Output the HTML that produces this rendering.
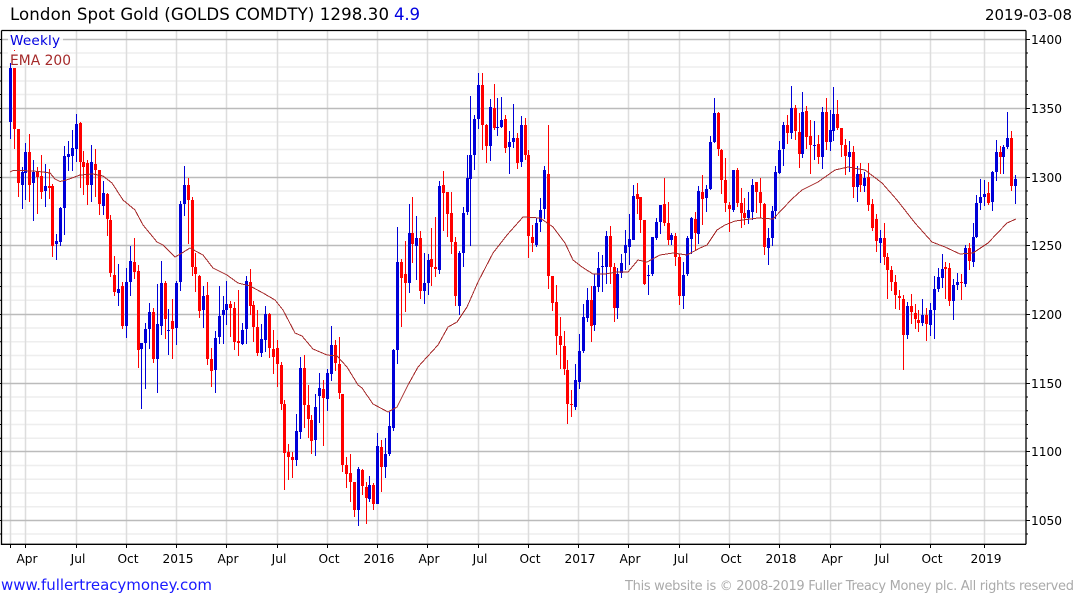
<!DOCTYPE html>
<html><head><meta charset="utf-8"><title>London Spot Gold</title>
<style>
html,body{margin:0;padding:0;background:#fff;width:1075px;height:600px;overflow:hidden}
svg{display:block}
text{font-family:"DejaVu Sans","Liberation Sans",sans-serif}
</style></head><body>
<svg width="1075" height="600" viewBox="0 0 1075 600" xmlns="http://www.w3.org/2000/svg">
<rect width="1075" height="600" fill="#fff"/>
<path fill="none" stroke="#eee" stroke-width="1.5" d="M2 53H1026M2 67H1026M2 81H1026M2 94.5H1026M2 122H1026M2 135.8H1026M2 149.5H1026M2 163.3H1026M2 191H1026M2 204.8H1026M2 218.5H1026M2 232.3H1026M2 259H1026M2 272.8H1026M2 286.5H1026M2 300.3H1026M2 328H1026M2 341.8H1026M2 355.5H1026M2 369.3H1026M2 397H1026M2 410.8H1026M2 424.5H1026M2 438.3H1026M2 465.5H1026M2 479.3H1026M2 493H1026M2 506.8H1026M2 534H1026"/>
<path fill="none" stroke="#ddd" stroke-width="1.5" d="M10.5 31V544M25.5 31V544M76.5 31V544M126.5 31V544M176.5 31V544M226.5 31V544M277.5 31V544M327.5 31V544M377.5 31V544M427.5 31V544M478.5 31V544M528.5 31V544M578.5 31V544M628.5 31V544M679.5 31V544M729.5 31V544M779.5 31V544M830.5 31V544M880.5 31V544M930.5 31V544M984.5 31V544"/>
<path fill="none" stroke="#bbb" stroke-width="1.4" d="M2 39.5H1026M2 108.5H1026M2 177.5H1026M2 245.5H1026M2 314.5H1026M2 383.5H1026M2 451.5H1026M2 520.5H1026"/>
<g fill="none" shape-rendering="crispEdges">
<path stroke="#0000d8" stroke-width="1" d="M10.5 63V139M22.5 167V209M25.5 143V200M33.5 160V221M45.5 164V207M56.5 234V260M60.5 207V246M64.5 146V235M68.5 141V171M72.5 130V171M76.5 114V162M91.5 145V202M103.5 181V215M118.5 264V306M126.5 268V338M130.5 246V296M141.5 343V409M145.5 323V389M149.5 303V349M157.5 284V393M161.5 261V335M168.5 309V355M176.5 281V345M180.5 201V291M184.5 166V216M203.5 286V328M215.5 331V393M219.5 286V344M223.5 296V344M226.5 281V325M242.5 323V345M246.5 276V344M261.5 324V357M265.5 306V352M296.5 414V466M300.5 357V439M315.5 394V456M319.5 373V423M327.5 369V411M331.5 326V381M358.5 467V526M369.5 476V502M377.5 433V504M385.5 438V478M389.5 412V456M393.5 349V431M397.5 227V364M409.5 204V293M416.5 216V280M424.5 253V304M428.5 254V295M439.5 181V274M459.5 251V315M463.5 207V267M467.5 155V215M470.5 96V246M474.5 115V170M478.5 73V129M490.5 99V161M497.5 98V136M501.5 97V128M509.5 131V174M513.5 104V148M521.5 116V167M536.5 218V247M540.5 198V232M544.5 166V219M575.5 364V410M579.5 334V389M583.5 304V353M587.5 288V322M594.5 274V331M598.5 252V292M602.5 255V292M606.5 231V284M617.5 268V319M621.5 254V278M625.5 230V270M629.5 214V265M633.5 185V240M648.5 265V295M652.5 237V276M656.5 218V240M660.5 205V234M671.5 233V245M683.5 262V309M687.5 236V276M691.5 217V254M698.5 186V244M706.5 185V212M710.5 136V190M714.5 98V143M733.5 170V212M748.5 192V224M752.5 179V220M768.5 228V265M772.5 206V246M775.5 166V219M779.5 141V174M783.5 122V166M791.5 86V139M802.5 92V158M814.5 121V160M822.5 107V169M830.5 110V151M833.5 87V141M849.5 141V172M857.5 166V202M864.5 172V192M880.5 230V263M907.5 302V339M922.5 299V326M930.5 303V336M934.5 276V339M938.5 268V292M942.5 254V288M953.5 279V320M957.5 273V290M965.5 245V287M973.5 223V267M976.5 195V238M980.5 179V210M984.5 180V206M992.5 171V211M996.5 140V181M1003.5 145V174M1007.5 112V149M1015.5 175V204"/>
<path stroke="#0000d8" stroke-width="3" d="M10.5 68V122M22.5 172V185M25.5 152V173M33.5 172V183M45.5 186V191M56.5 241V244M60.5 208V242M64.5 156V208M68.5 154V157M72.5 148V156M76.5 124V149M91.5 162V185M103.5 193V206M118.5 289V293M126.5 282V326M130.5 261V282M141.5 343V349M145.5 329V343M149.5 312V329M157.5 324V359M161.5 283V326M168.5 330V331M176.5 283V328M180.5 204V282M184.5 185V204M203.5 296V310M215.5 338V370M219.5 316V337M223.5 310V315M226.5 304V310M242.5 330V344M246.5 281V329M261.5 339V353M265.5 314V340M296.5 431V460M300.5 368V432M315.5 407V440M319.5 388V396M327.5 373V399M331.5 345V374M358.5 469V510M369.5 485V499M377.5 446V504M385.5 454V467M389.5 426V454M393.5 350V428M397.5 262V350M409.5 233V283M416.5 238V246M424.5 283V291M428.5 260V283M439.5 186V270M459.5 253V306M463.5 213V253M467.5 178V212M470.5 155V179M474.5 119V155M478.5 85V119M490.5 107V146M497.5 127V128M501.5 120V127M509.5 142V147M513.5 138V142M521.5 125V162M536.5 223V245M540.5 210V222M544.5 170V209M575.5 380V407M579.5 351V382M583.5 317V351M587.5 300V318M594.5 286V325M598.5 268V287M602.5 266V267M606.5 236V267M617.5 274V308M621.5 263V273M625.5 245V253M629.5 239V247M633.5 196V240M648.5 275V276M652.5 237V274M656.5 222V238M660.5 205V222M671.5 235V240M683.5 275V296M687.5 238V274M691.5 218V239M698.5 191V234M706.5 189V198M710.5 142V189M714.5 113V142M733.5 170V210M748.5 210V218M752.5 185V212M768.5 238V248M772.5 211V238M775.5 172V211M779.5 150V173M783.5 125V149M791.5 108V133M802.5 112V154M814.5 145V146M822.5 112V157M830.5 130V142M833.5 114V131M849.5 152V157M857.5 174V187M864.5 178V186M880.5 238V243M907.5 306V335M922.5 315V323M930.5 310V325M934.5 289V310M938.5 277V289M942.5 269V278M953.5 285V301M957.5 282V285M965.5 248V284M973.5 237V262M976.5 203V237M980.5 197V203M984.5 194V197M992.5 172V202M996.5 152V172M1003.5 147V157M1007.5 138V147M1015.5 179V186"/>
<path stroke="#ff0000" stroke-width="1" d="M14.5 68V149M18.5 129V197M29.5 134V202M37.5 167V214M41.5 155V199M49.5 169V199M52.5 184V257M80.5 122V188M83.5 151V195M87.5 160V205M95.5 149V197M99.5 170V215M107.5 193V236M110.5 215V277M114.5 256V296M122.5 282V329M134.5 238V279M138.5 265V368M153.5 308V363M165.5 281V339M172.5 299V359M188.5 178V244M192.5 197V276M195.5 253V292M199.5 275V318M207.5 282V365M211.5 348V387M230.5 301V337M234.5 302V350M238.5 290V356M250.5 269V315M253.5 301V342M257.5 310V356M269.5 313V358M273.5 330V374M277.5 340V387M281.5 362V410M284.5 400V490M288.5 444V480M292.5 452V478M304.5 355V428M308.5 385V438M311.5 415V454M323.5 380V446M335.5 340V371M339.5 337V399M342.5 394V472M346.5 457V488M350.5 454V502M354.5 482V517M362.5 469V495M366.5 482V524M373.5 483V510M381.5 440V492M401.5 259V327M405.5 241V312M412.5 197V263M420.5 231V299M431.5 228V286M435.5 217V277M443.5 171V231M447.5 192V237M451.5 192V254M455.5 237V306M482.5 73V150M486.5 124V163M494.5 84V130M505.5 115V153M517.5 133V169M525.5 118V160M528.5 150V258M532.5 225V252M548.5 125V289M552.5 276V311M556.5 285V355M560.5 317V369M564.5 331V375M567.5 360V424M571.5 390V417M591.5 286V342M610.5 226V284M614.5 263V322M637.5 183V214M640.5 197V233M644.5 220V285M664.5 178V226M668.5 202V245M675.5 233V266M679.5 254V305M695.5 212V250M702.5 175V225M718.5 112V156M721.5 149V194M725.5 158V212M729.5 202V232M737.5 168V207M741.5 188V228M744.5 198V225M756.5 182V213M760.5 178V218M764.5 203V255M787.5 115V144M795.5 105V140M799.5 113V168M806.5 106V149M810.5 120V174M818.5 135V164M826.5 98V150M837.5 100V130M841.5 128V157M845.5 139V175M853.5 146V198M860.5 163V192M868.5 163V211M872.5 199V231M876.5 214V252M884.5 223V265M887.5 253V299M891.5 266V291M895.5 275V309M899.5 290V310M903.5 295V370M911.5 294V324M915.5 304V329M918.5 310V332M926.5 308V341M945.5 262V299M949.5 263V306M961.5 274V300M969.5 243V270M988.5 182V205M1000.5 146V174M1011.5 131V191"/>
<path stroke="#ff0000" stroke-width="3" d="M14.5 68V129M18.5 129V183M29.5 152V185M37.5 172V177M41.5 176V192M49.5 186V188M52.5 186V246M80.5 123V162M83.5 162V167M87.5 163V185M95.5 164V170M99.5 170V204M107.5 194V219M110.5 220V273M114.5 275V292M122.5 286V326M134.5 262V272M138.5 271V350M153.5 312V359M165.5 283V319M172.5 321V329M188.5 185V200M192.5 200V267M195.5 267V274M199.5 276V311M207.5 295V359M211.5 359V371M230.5 304V308M234.5 308V342M238.5 341V343M250.5 282V306M253.5 305V327M257.5 327V353M269.5 314V348M273.5 349V357M277.5 348V364M281.5 365V404M284.5 404V453M288.5 452V457M292.5 457V460M304.5 368V405M308.5 405V419M311.5 420V441M323.5 389V398M335.5 345V363M339.5 364V393M342.5 394V465M346.5 465V474M350.5 473V482M354.5 482V510M362.5 470V486M366.5 487V498M373.5 485V504M381.5 447V467M401.5 262V278M405.5 274V283M412.5 233V244M420.5 238V291M431.5 259V267M435.5 267V269M443.5 185V193M447.5 192V214M451.5 213V242M455.5 242V296M482.5 85V125M486.5 125V146M494.5 108V128M505.5 119V148M517.5 138V163M525.5 125V155M528.5 155V236M532.5 237V243M548.5 174V276M552.5 276V303M556.5 302V336M560.5 336V345M564.5 346V369M567.5 370V404M571.5 404V405M591.5 300V326M610.5 236V267M614.5 267V308M637.5 194V199M640.5 197V220M644.5 220V284M664.5 204V223M668.5 223V240M675.5 236V257M679.5 257V296M695.5 219V233M702.5 192V199M718.5 113V149M721.5 150V180M725.5 180V203M729.5 205V209M737.5 170V203M741.5 203V213M744.5 213V218M756.5 182V192M760.5 192V203M764.5 204V247M787.5 125V133M795.5 108V131M799.5 132V154M806.5 111V137M810.5 136V145M818.5 144V157M826.5 112V142M837.5 114V128M841.5 128V145M845.5 145V156M853.5 152V187M860.5 174V185M868.5 177V205M872.5 204V228M876.5 219V241M884.5 238V257M887.5 257V270M891.5 270V282M895.5 282V295M899.5 296V298M903.5 299V335M911.5 306V312M915.5 313V319M918.5 320V323M926.5 315V324M945.5 267V269M949.5 268V301M961.5 282V283M969.5 248V261M988.5 193V203M1000.5 152V157M1011.5 138V186"/>
</g>
<path fill="none" stroke="#a52a2a" stroke-width="1" shape-rendering="crispEdges" d="M10 172L13 170.5L20 170.5L33 171L43 172L50 173L55 179L60 181.5L68 179.5L80 175L93 174L103 176L112 183L123 200L135 210L143 225L157 242L163 245L175 257L182 253L190 248L203 255L213 268L227 275L238 283L250 286L263 293L275 300L283 310L295 333L302 336L313 349L327 355L337 356L347 367L358 385L362 388L373 404L388 412L397 407L408 385L418 367L427 357L438 345L448 327L457 322L467 307L478 282L493 253L507 235L523 217L540 218L553 227L565 243L573 260L582 267L593 274L605 274L617 272L628 272L638 260L647 262L660 255L673 253L687 255L700 248L707 245L717 230L725 225L735 221L758 218L773 219L792 199L802 190L818 182L835 170L848 167L865 170L882 183L897 200L915 223L932 242L945 247L960 254L973 253L988 243L1007 223L1016 219"/>
<rect x="8" y="32" width="55" height="31" fill="#fff" fill-opacity=".85"/>
<rect x="14" y="50" width="1" height="1" fill="#f00"/>
<text x="10" y="45" font-size="13.6" fill="#0000e0" textLength="50">Weekly</text>
<text x="10" y="65" font-size="13.8" fill="#a52a2a" textLength="61">EMA 200</text>
<path fill="none" stroke="#000" stroke-width="1.3" d="M1.5 30.5H1026M1.5 30.5V544.3H1026M1026 30.5V544.3"/>
<path fill="none" stroke="#000" stroke-width="1" d="M1026 39.5H1030M1026 108.5H1030M1026 177.5H1030M1026 245.5H1030M1026 314.5H1030M1026 383.5H1030M1026 451.5H1030M1026 520.5H1030M1026 53H1028M1026 67H1028M1026 81H1028M1026 94.5H1028M1026 122H1028M1026 135.8H1028M1026 149.5H1028M1026 163.3H1028M1026 191H1028M1026 204.8H1028M1026 218.5H1028M1026 232.3H1028M1026 259H1028M1026 272.8H1028M1026 286.5H1028M1026 300.3H1028M1026 328H1028M1026 341.8H1028M1026 355.5H1028M1026 369.3H1028M1026 397H1028M1026 410.8H1028M1026 424.5H1028M1026 438.3H1028M1026 465.5H1028M1026 479.3H1028M1026 493H1028M1026 506.8H1028M1026 534H1028M0 39.5H2M0 53H2M0 67H2M0 81H2M0 94.5H2M0 108.5H2M0 122H2M0 135.8H2M0 149.5H2M0 163.3H2M0 177.5H2M0 191H2M0 204.8H2M0 218.5H2M0 232.3H2M0 245.5H2M0 259H2M0 272.8H2M0 286.5H2M0 300.3H2M0 314.5H2M0 328H2M0 341.8H2M0 355.5H2M0 369.3H2M0 383.5H2M0 397H2M0 410.8H2M0 424.5H2M0 438.3H2M0 451.5H2M0 465.5H2M0 479.3H2M0 493H2M0 506.8H2M0 520.5H2M0 534H2M10.5 544V548M25.5 544V548M76.5 544V548M126.5 544V548M176.5 544V548M226.5 544V548M277.5 544V548M327.5 544V548M377.5 544V548M427.5 544V548M478.5 544V548M528.5 544V548M578.5 544V548M628.5 544V548M679.5 544V548M729.5 544V548M779.5 544V548M830.5 544V548M880.5 544V548M930.5 544V548M984.5 544V548"/>
<text x="10" y="20" font-size="16.6" fill="#000" textLength="379">London Spot Gold (GOLDS COMDTY) 1298.30</text>
<text x="394" y="20" font-size="16.6" fill="#0000e0" textLength="26">4.9</text>
<text x="985" y="20" font-size="15" fill="#000" textLength="87">2019-03-08</text>
<g font-size="12.2" fill="#000">
<text x="1031" y="44" textLength="31">1400</text>
<text x="1031" y="113" textLength="31">1350</text>
<text x="1031" y="182" textLength="31">1300</text>
<text x="1031" y="250" textLength="31">1250</text>
<text x="1031" y="319" textLength="31">1200</text>
<text x="1031" y="388" textLength="31">1150</text>
<text x="1031" y="456" textLength="31">1100</text>
<text x="1031" y="525" textLength="31">1050</text>
</g>
<g font-size="12.2" fill="#000" text-anchor="middle">
<text x="27" y="563">Apr</text><text x="78" y="563">Jul</text><text x="128" y="563">Oct</text><text x="178" y="563">2015</text>
<text x="228" y="563">Apr</text><text x="279" y="563">Jul</text><text x="329" y="563">Oct</text><text x="379" y="563">2016</text>
<text x="429" y="563">Apr</text><text x="480" y="563">Jul</text><text x="530" y="563">Oct</text><text x="580" y="563">2017</text>
<text x="630" y="563">Apr</text><text x="681" y="563">Jul</text><text x="731" y="563">Oct</text><text x="781" y="563">2018</text>
<text x="832" y="563">Apr</text><text x="882" y="563">Jul</text><text x="932" y="563">Oct</text><text x="986" y="563">2019</text>
</g>
<text x="1" y="590" font-size="15" fill="#1a1aff" textLength="211">www.fullertreacymoney.com</text>
<text x="625" y="590" font-size="13" fill="#aaa" textLength="449">This website is © 2008-2019 Fuller Treacy Money plc. All rights reserved</text>
</svg>
</body></html>
